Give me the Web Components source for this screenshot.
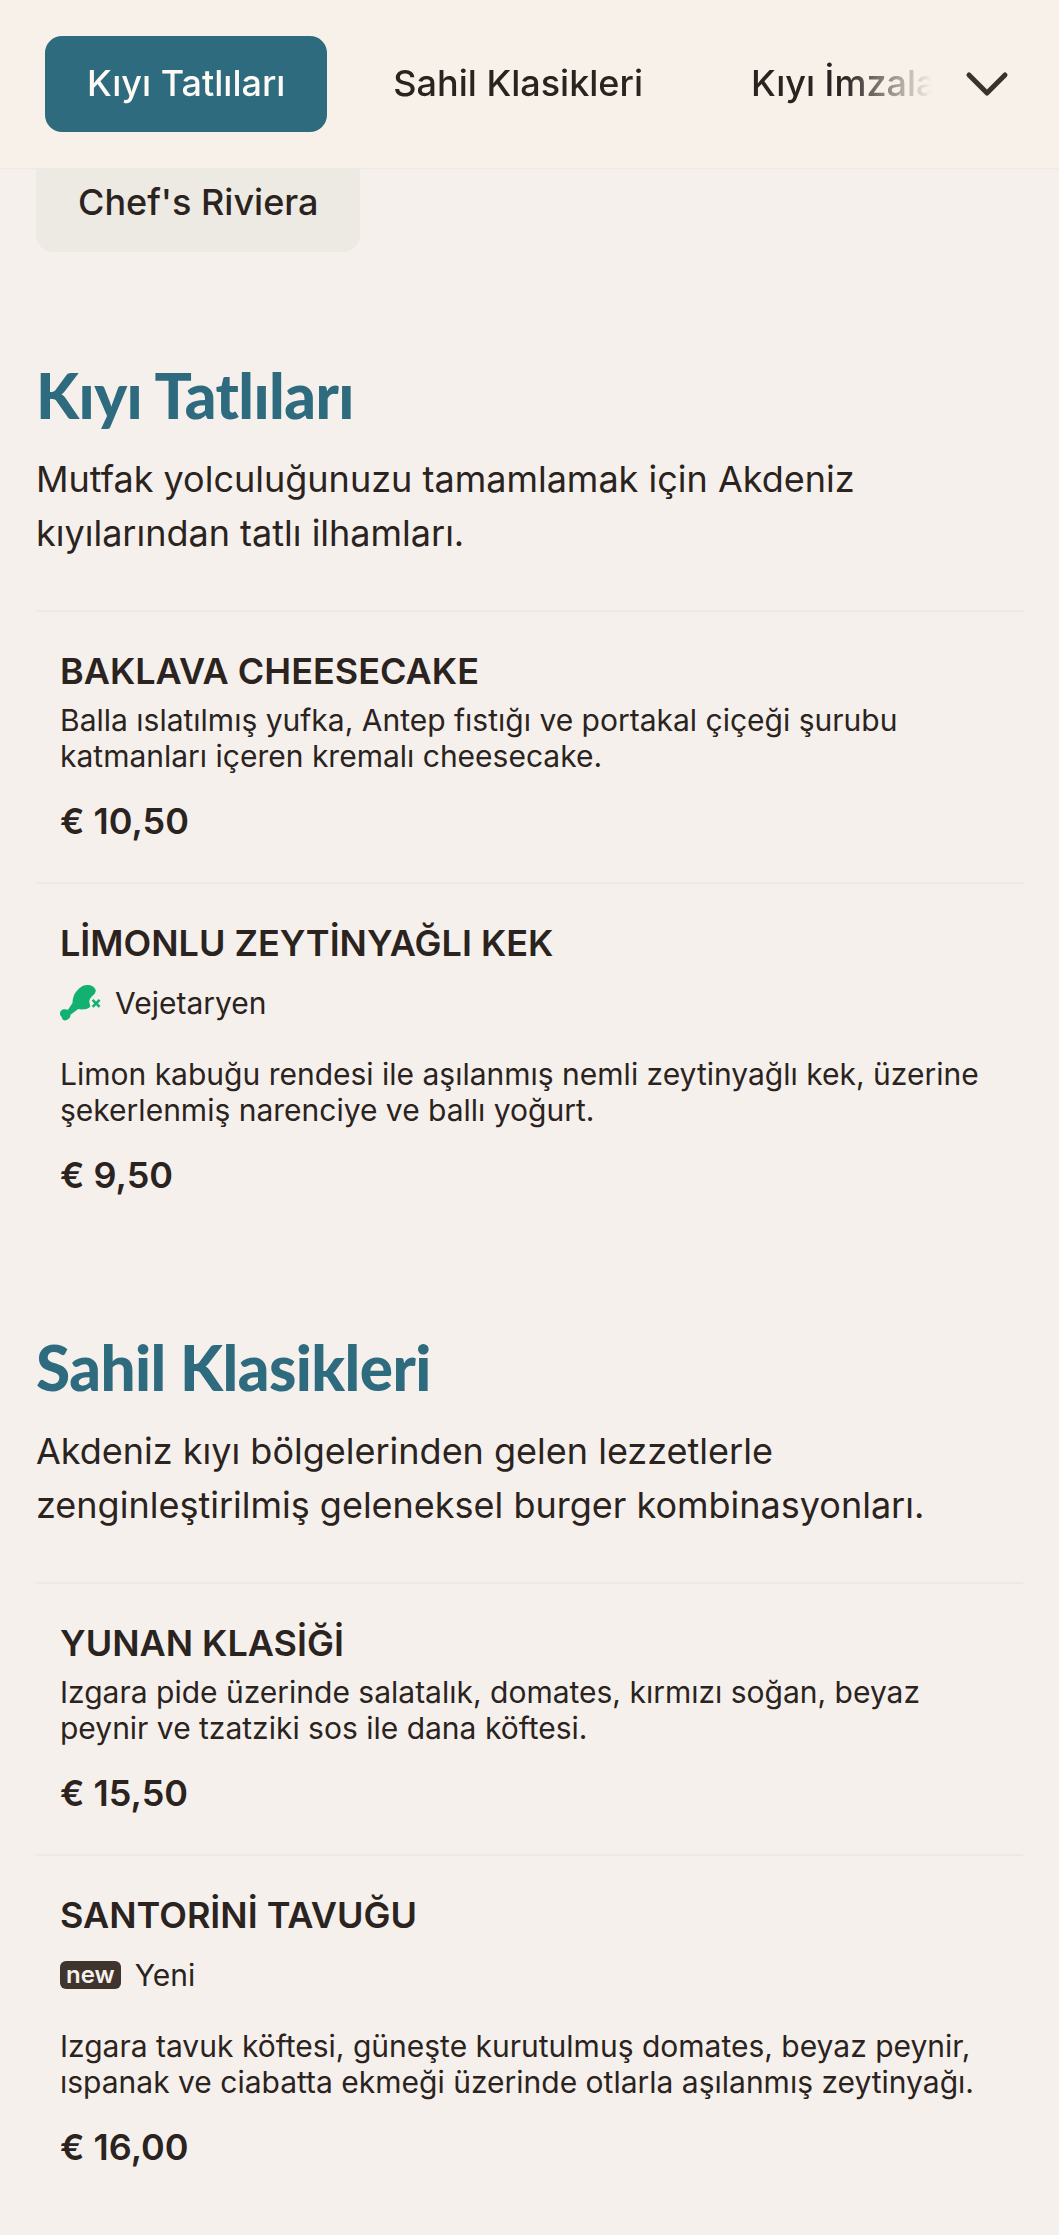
<!DOCTYPE html>
<html lang="tr">
<head>
<meta charset="utf-8">
<title>Menu</title>
<style>
  html, body { margin: 0; background: #f6f0ec; }
  body { font-family: Inter, "Liberation Sans", sans-serif; color: #2a2320; }
</style>
</head>
<body>
<menu-nav>
  <menu-tab active>Kıyı Tatlıları</menu-tab>
  <menu-tab>Sahil Klasikleri</menu-tab>
  <menu-tab>Kıyı İmzaları</menu-tab>
</menu-nav>
<overflow-tab>Chef's Riviera</overflow-tab>

<menu-section heading="Kıyı Tatlıları" style="--top: 105px">
  <span slot="intro">Mutfak yolculuğunuzu tamamlamak için Akdeniz kıyılarından tatlı ilhamları.</span>
  <menu-item name="BAKLAVA CHEESECAKE" price="€ 10,50">Balla ıslatılmış yufka, Antep fıstığı ve portakal çiçeği şurubu katmanları içeren kremalı cheesecake.</menu-item>
  <menu-item name="LİMONLU ZEYTİNYAĞLI KEK" price="€ 9,50">
    <diet-tag slot="tag" kind="veg">Vejetaryen</diet-tag>
    Limon kabuğu rendesi ile aşılanmış nemli zeytinyağlı kek, üzerine şekerlenmiş narenciye ve ballı yoğurt.
  </menu-item>
</menu-section>

<menu-section heading="Sahil Klasikleri" style="--top: 93px">
  <span slot="intro">Akdeniz kıyı bölgelerinden gelen lezzetlerle zenginleştirilmiş geleneksel burger kombinasyonları.</span>
  <menu-item name="YUNAN KLASİĞİ" price="€ 15,50">Izgara pide üzerinde salatalık, domates, kırmızı soğan, beyaz peynir ve tzatziki sos ile dana köftesi.</menu-item>
  <menu-item name="SANTORİNİ TAVUĞU" price="€ 16,00">
    <diet-tag slot="tag" kind="new">Yeni</diet-tag>
    Izgara tavuk köftesi, güneşte kurutulmuş domates, beyaz peynir, ıspanak ve ciabatta ekmeği üzerinde otlarla aşılanmış zeytinyağı.
  </menu-item>
</menu-section>

<script>
class MenuNav extends HTMLElement {
  connectedCallback() {
    this.attachShadow({ mode: 'open' });
    this.shadowRoot.innerHTML = `
      <style>
        :host {
          display: flex;
          align-items: center;
          height: 168px;
          padding-left: 45px;
          padding-right: 50px;
          background: #f8f1ea;
          border-bottom: 1px solid #efe9e3;
        }
        .tabs {
          flex: 1;
          min-width: 0;
          display: flex;
          gap: 24px;
          overflow: hidden;
          -webkit-mask-image: linear-gradient(to right, #000 calc(100% - 90px), transparent calc(100% - 2px));
          mask-image: linear-gradient(to right, #000 calc(100% - 90px), transparent calc(100% - 2px));
        }
        svg { flex: none; margin-left: 31px; }
      </style>
      <div class="tabs"><slot></slot></div>
      <svg width="44" height="28" viewBox="0 0 44 28" fill="none" stroke="#3a322d" stroke-width="5" stroke-linecap="round" stroke-linejoin="round">
        <path d="M4 5 L22 23 L40 5"/>
      </svg>
    `;
  }
}

class MenuTab extends HTMLElement {
  connectedCallback() {
    this.attachShadow({ mode: 'open' });
    this.shadowRoot.innerHTML = `
      <style>
        :host {
          display: block;
          flex: none;
          padding: 0 42px;
          height: 96px;
          line-height: 94px;
          font-size: 36px;
          font-weight: 500;
          white-space: nowrap;
          border-radius: 17px;
          color: #2a2320;
        }
        :host([active]) {
          background: #2f6b7e;
          color: #fdf9f5;
        }
      </style>
      <slot></slot>
    `;
  }
}

class OverflowTab extends HTMLElement {
  connectedCallback() {
    this.attachShadow({ mode: 'open' });
    this.shadowRoot.innerHTML = `
      <style>
        :host {
          display: block;
          width: fit-content;
          margin-left: 36px;
          padding: 0 41px 0 42px;
          height: 83px;
          line-height: 67px;
          font-size: 36px;
          font-weight: 500;
          white-space: nowrap;
          background: #edeae3;
          border-radius: 0 0 17px 17px;
        }
      </style>
      <slot></slot>
    `;
  }
}

class MenuSection extends HTMLElement {
  connectedCallback() {
    this.attachShadow({ mode: 'open' });
    this.shadowRoot.innerHTML = `
      <style>
        :host {
          display: block;
          padding: var(--top) 36px 0;
        }
        h2 {
          margin: 0 0 19px;
          font-family: Lato, "Liberation Sans", sans-serif;
          font-size: 62px;
          line-height: 76px;
          font-weight: 900;
          color: #2f6b7e;
          letter-spacing: -0.55px;
        }
        .intro {
          font-size: 36px;
          line-height: 54px;
          margin-bottom: 50px;
        }
      </style>
      <h2></h2>
      <div class="intro"><slot name="intro"></slot></div>
      <slot></slot>
    `;
    this.shadowRoot.querySelector('h2').textContent = this.getAttribute('heading');
  }
}

class MenuItem extends HTMLElement {
  connectedCallback() {
    this.attachShadow({ mode: 'open' });
    this.shadowRoot.innerHTML = `
      <style>
        :host {
          display: block;
          padding: 37px 24px 39px;
          border-top: 2px solid #efe9e3;
        }
        h3 {
          margin: 0 0 9px;
          font-size: 36px;
          line-height: 44px;
          font-weight: 600;
        }
        .desc {
          font-size: 30px;
          line-height: 36px;
        }
        .price {
          margin-top: 25px;
          font-size: 36px;
          line-height: 44px;
          font-weight: 600;
        }
      </style>
      <h3></h3>
      <slot name="tag"></slot>
      <div class="desc"><slot></slot></div>
      <div class="price"></div>
    `;
    this.shadowRoot.querySelector('h3').textContent = this.getAttribute('name');
    this.shadowRoot.querySelector('.price').textContent = this.getAttribute('price');
  }
}

class DietTag extends HTMLElement {
  connectedCallback() {
    this.attachShadow({ mode: 'open' });
    const icon = this.getAttribute('kind') === 'veg'
      ? `<svg width="41" height="36" viewBox="0 0 41 36">
           <path fill="#12b071" d="M23 .7 C26 -.2 30 -.2 32 1 C34 2 36 4 35.7 6 C35.4 9 32.5 10.5 31 12.5 C29.5 14.5 29 16 29.5 18 C30 20 30.5 21 30 22 C28 24.5 21 25 18.3 24 L10.5 29.8 C10.5 31.5 10 32.8 8.6 33.8 C7 35.2 5 35.8 4 35.2 C2.5 34.6 2 33.2 1.7 31.9 C.5 31 -.3 29.5 0 28 C.2 26 2 24.2 4 24.2 C5.5 24.1 7 24.3 8 24.8 L12.5 18 C12.5 14 13.5 10.5 15.5 7.5 C17.5 4.5 20.5 2 23 .7 Z"/>
           <path fill="none" stroke="#12b071" stroke-width="2.6" d="M32.6 14.8 L39.6 21.8 M39.6 14.8 L32.6 21.8"/>
         </svg>`
      : `<span class="new">new</span>`;
    this.shadowRoot.innerHTML = `
      <style>
        :host {
          display: flex;
          align-items: center;
          gap: 14px;
          margin: 12px 0 27px;
          height: 52px;
          font-size: 30px;
        }
        .new {
          background: #40342e;
          color: #f6f0eb;
          border-radius: 6px;
          font-size: 24px;
          font-weight: 600;
          line-height: 28px;
          padding: 0 6px;
        }
      </style>
      ${icon}
      <span><slot></slot></span>
    `;
  }
}

customElements.define('menu-nav', MenuNav);
customElements.define('menu-tab', MenuTab);
customElements.define('overflow-tab', OverflowTab);
customElements.define('menu-section', MenuSection);
customElements.define('menu-item', MenuItem);
customElements.define('diet-tag', DietTag);
</script>
</body>
</html>
